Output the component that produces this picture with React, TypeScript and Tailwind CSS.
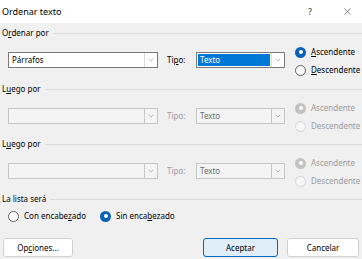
import React from 'react';
import { ChevronDown, X } from 'lucide-react';

const font = { fontFamily: '"Noto Sans", "Open Sans", sans-serif' };

// Header with rule running to the right edge
const Section = ({ children, className = '' }: { children: React.ReactNode; className?: string }) => (
  <div className={`flex items-center h-[12px] pl-[2px] ${className}`}>
    <span className="text-black whitespace-nowrap">{children}</span>
    <div className="flex-1 ml-[4px] border-t border-[#dcdcdc]" />
  </div>
);

const Combo = ({ value, width, enabled, selected }: { value: string; width: string; enabled?: boolean; selected?: boolean }) => (
  <div
    className={`flex h-[16px] ${width} border ${enabled ? 'border-[#7a7a7a] bg-white' : 'border-[#c6c6c6] bg-[#f4f4f4]'}`}
  >
    <div className="flex-1 flex items-center px-[1px]">
      {value && (
        <span
          className={`flex items-center h-[12px] w-full px-[2px] ${
            selected ? 'bg-[#0078d7] text-white' : enabled ? 'text-black' : 'text-[#6d6d6d]'
          }`}
        >
          {value}
        </span>
      )}
    </div>
    <div className={`w-[13px] flex items-center justify-center border-l ${enabled ? 'border-[#dadada]' : 'border-[#c6c6c6]'}`}>
      <ChevronDown size={8} strokeWidth={1.5} className="text-[#7a7a7a]" />
    </div>
  </div>
);

const Radio = ({ checked, enabled }: { checked?: boolean; enabled?: boolean }) => {
  if (checked) {
    return (
      <span
        className={`flex items-center justify-center w-[11px] h-[11px] rounded-full ${enabled ? 'bg-[#0a63b9]' : 'bg-[#c2c2c2]'}`}
      >
        <span className="w-[4px] h-[4px] rounded-full bg-white" />
      </span>
    );
  }
  return (
    <span
      className={`w-[11px] h-[11px] rounded-full border ${enabled ? 'border-[#5f5f5f] bg-white' : 'border-[#d4d4d4] bg-[#f7f7f7]'}`}
    />
  );
};

const Order = ({ enabled }: { enabled?: boolean }) => (
  <div className="flex flex-col">
    <div className="flex items-center h-[18px] gap-[5px]">
      <Radio checked enabled={enabled} />
      <span className={enabled ? 'text-black' : 'text-[#9c9c9c]'}>
        {enabled ? <><u>A</u>scendente</> : 'Ascendente'}
      </span>
    </div>
    <div className="flex items-center h-[18px] gap-[5px]">
      <Radio enabled={enabled} />
      <span className={enabled ? 'text-black' : 'text-[#9c9c9c]'}>
        {enabled ? <><u>D</u>escendente</> : 'Descendente'}
      </span>
    </div>
  </div>
);

const SortRow = ({ first, enabled, className = '' }: { first: string; enabled?: boolean; className?: string }) => (
  <div className={`flex items-start h-[36px] pl-[8px] ${className}`}>
    <div className="flex items-center mt-[9px]">
      <Combo value={first} width="w-[150px]" enabled={enabled} />
      <span className={`ml-[9px] w-[29px] ${enabled ? 'text-black' : 'text-[#9c9c9c]'}`}>
        {enabled ? <>Ti<u>p</u>o:</> : 'Tipo:'}
      </span>
      <Combo value="Texto" width="w-[89px]" enabled={enabled} selected={enabled} />
    </div>
    <div className="ml-[10px]">
      <Order enabled={enabled} />
    </div>
  </div>
);

export default function App() {
  return (
    <div className="w-[362px] h-[259px] bg-[#f0f0f0] text-[8px] leading-none overflow-hidden" style={font}>
      <div className="flex items-center h-[23px] bg-white pl-[2px]">
        <span className="text-[9px] text-black">Ordenar texto</span>
        <span className="ml-auto text-[9px] text-[#333]">?</span>
        <X size={11} strokeWidth={1.2} className="ml-[30px] mr-[9px] text-[#222]" />
      </div>

      <Section className="mt-[4px]">
        O<u>r</u>denar por
      </Section>
      <SortRow first="Párrafos" enabled className="mt-[4px]" />

      <Section className="mt-[4px]">
        L<u>u</u>ego por
      </Section>
      <SortRow first="" className="mt-[4px]" />

      <Section className="mt-[3px]">
        L<u>u</u>ego por
      </Section>
      <SortRow first="" className="mt-[4px]" />

      <Section className="mt-[3px]">La lista será</Section>
      <div className="flex items-center h-[18px] mt-[2px] pl-[8px]">
        <Radio enabled />
        <span className="ml-[5px]">
          Con encabe<u>z</u>ado
        </span>
        <span className="ml-[14px]">
          <Radio checked enabled />
        </span>
        <span className="ml-[5px]">
          Sin enca<u>b</u>ezado
        </span>
      </div>

      <div className="flex items-center mt-[13px] pl-[3px] pr-[3px]">
        <button className="w-[70px] h-[19px] bg-white border border-[#d0d0d0] rounded-[3px] text-black">
          Op<u>c</u>iones...
        </button>
        <button className="ml-auto w-[75px] h-[19px] bg-[#e0eef9] border border-[#0067c0] rounded-[3px] text-black">
          Aceptar
        </button>
        <button className="ml-[9px] w-[72px] h-[19px] bg-white border border-[#d0d0d0] rounded-[3px] text-black">
          Cancelar
        </button>
      </div>
    </div>
  );
}
